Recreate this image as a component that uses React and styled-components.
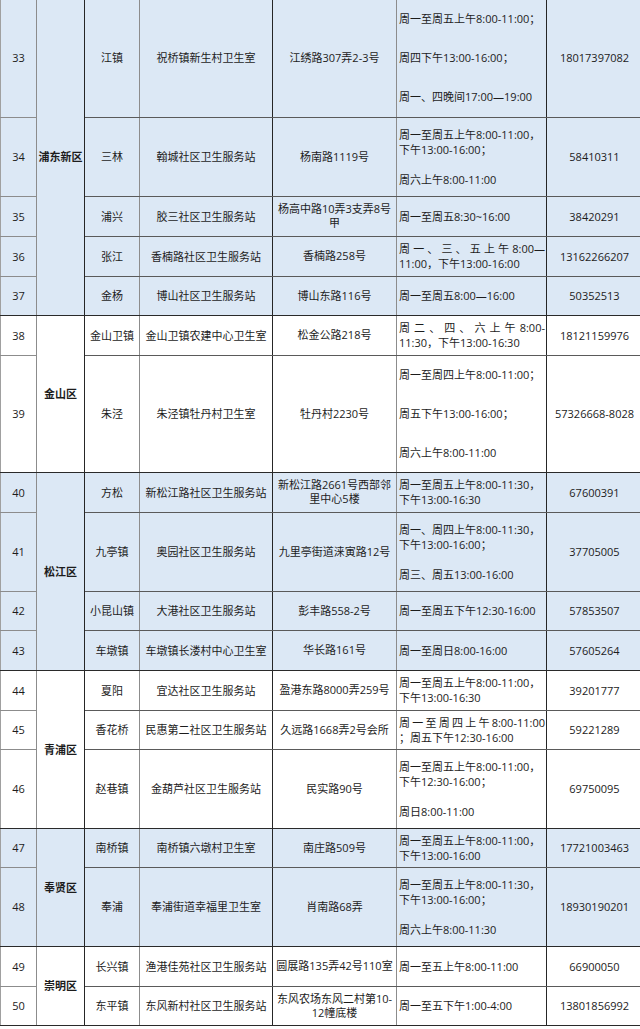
import styled, { createGlobalStyle } from 'styled-components';

const GlobalStyle = createGlobalStyle`
    html, body {
        margin: 0;
        padding: 0;
        background: #ffffff;
        overflow: hidden;
    }
    body {
        font-family: "Open Sans", "Noto Sans CJK SC", sans-serif;
        color: #1c1c1c;
    }
`;

const Sheet = styled.table`
    width: 642px;
    margin-top: -1px;
    border-collapse: collapse;
    table-layout: fixed;
    font-size: 11px;
    line-height: 15px;
`;

const Col = styled.col`
    width: ${p => p.$w}px;
`;

const Row = styled.tr`
    height: ${p => p.$h}px;
    background: ${p => (p.$blue ? '#dce8f5' : '#ffffff')};
`;

const Cell = styled.td`
    padding: 0 1px;
    text-align: center;
    vertical-align: middle;
    white-space: nowrap;
    overflow: hidden;
    border-bottom: 1px solid ${p => (p.$groupEnd ? '#2a2a2a' : '#5a5a5a')};
    border-right: 1px solid ${p => (p.$dark ? '#262626' : '#8c8c8c')};
`;

const NoCell = styled(Cell)`
    border-left: 1px solid #a0a0a0;
    border-bottom-color: ${p => (p.$groupEnd ? '#2a2a2a' : '#8c8c8c')};
`;

const DistrictCell = styled(Cell)`
    font-weight: 700;
    border-bottom-color: #2a2a2a;
`;

const HoursCell = styled(Cell)`
    text-align: left;
    padding: 0 1px 0 2px;
`;

const Stack = styled.div`
    display: flex;
    flex-direction: column;
    gap: ${p => p.$gap || 0}px;
`;

const Line = styled.div`
    height: 15px;
    text-align: ${p => (p.$justify ? 'justify' : 'inherit')};
    text-align-last: ${p => (p.$justify ? 'justify' : 'auto')};
    white-space: ${p => (p.$justify ? 'normal' : 'nowrap')};
`;

const AddrLine = styled.div`
    line-height: 14px;
`;

const groups = [
    {
        district: '浦东新区', blue: true, rows: [
            { no: 33, h: 118, town: '江镇', name: '祝桥镇新生村卫生室', addr: ['江绣路307弄2-3号'], gap: 24,
                hours: ['周一至周五上午8:00-11:00；', '周四下午13:00-16:00；', '周一、四晚间17:00—19:00'], phone: '18017397082' },
            { no: 34, h: 79, town: '三林', name: '翰城社区卫生服务站', addr: ['杨南路1119号'],
                hours: ['周一至周五上午8:00-11:00，', '下午13:00-16:00；', '', '周六上午8:00-11:00'], phone: '58410311' },
            { no: 35, h: 40, town: '浦兴', name: '胶三社区卫生服务站', addr: ['杨高中路10弄3支弄8号', '甲'],
                hours: ['周一至周五8:30~16:00'], phone: '38420291' },
            { no: 36, h: 40, town: '张江', name: '香楠路社区卫生服务站', addr: ['香楠路258号'],
                hours: ['*周一、三、五上午8:00—', '11:00，下午13:00-16:00'], phone: '13162266207' },
            { no: 37, h: 39, town: '金杨', name: '博山社区卫生服务站', addr: ['博山东路116号'],
                hours: ['周一至周五8:00—16:00'], phone: '50352513' },
        ],
    },
    {
        district: '金山区', rows: [
            { no: 38, h: 40, town: '金山卫镇', name: '金山卫镇农建中心卫生室', addr: ['松金公路218号'],
                hours: ['*周二、四、六上午8:00-', '11:30，下午13:00-16:30'], phone: '18121159976' },
            { no: 39, h: 117, town: '朱泾', name: '朱泾镇牡丹村卫生室', addr: ['牡丹村2230号'], gap: 24,
                hours: ['周一至周四上午8:00-11:00；', '周五下午13:00-16:00；', '周六上午8:00-11:00'], phone: '57326668-8028' },
        ],
    },
    {
        district: '松江区', blue: true, rows: [
            { no: 40, h: 40, town: '方松', name: '新松江路社区卫生服务站', addr: ['新松江路2661号西部邻', '里中心5楼'],
                hours: ['周一至周五上午8:00-11:30，', '下午13:00-16:30'], phone: '67600391' },
            { no: 41, h: 79, town: '九亭镇', name: '奥园社区卫生服务站', addr: ['九里亭街道涞寅路12号'],
                hours: ['周一、周四上午8:00-11:30，', '下午13:00-16:00；', '', '周三、周五13:00-16:00'], phone: '37705005' },
            { no: 42, h: 39, town: '小昆山镇', name: '大港社区卫生服务站', addr: ['彭丰路558-2号'],
                hours: ['周一至周五下午12:30-16:00'], phone: '57853507' },
            { no: 43, h: 40, town: '车墩镇', name: '车墩镇长溇村中心卫生室', addr: ['华长路161号'],
                hours: ['周一至周日8:00-16:00'], phone: '57605264' },
        ],
    },
    {
        district: '青浦区', rows: [
            { no: 44, h: 40, town: '夏阳', name: '宜达社区卫生服务站', addr: ['盈港东路8000弄259号'],
                hours: ['周一至周五上午8:00-11:00，', '下午13:00-16:30'], phone: '39201777' },
            { no: 45, h: 39, town: '香花桥', name: '民惠第二社区卫生服务站', addr: ['久远路1668弄2号会所'],
                hours: ['*周一至周四上午8:00-11:00', '；周五下午12:30-16:00'], phone: '59221289' },
            { no: 46, h: 79, town: '赵巷镇', name: '金葫芦社区卫生服务站', addr: ['民实路90号'],
                hours: ['周一至周五上午8:00-11:00，', '下午12:30-16:00；', '', '周日8:00-11:00'], phone: '69750095' },
        ],
    },
    {
        district: '奉贤区', blue: true, rows: [
            { no: 47, h: 39, town: '南桥镇', name: '南桥镇六墩村卫生室', addr: ['南庄路509号'],
                hours: ['周一至周五上午8:00-11:00，', '下午13:00-16:00'], phone: '17721003463' },
            { no: 48, h: 79, town: '奉浦', name: '奉浦街道幸福里卫生室', addr: ['肖南路68弄'],
                hours: ['周一至周五上午8:00-11:30，', '下午13:00-16:00；', '', '周六上午8:00-11:30'], phone: '18930190201' },
        ],
    },
    {
        district: '崇明区', rows: [
            { no: 49, h: 40, town: '长兴镇', name: '渔港佳苑社区卫生服务站', addr: ['圆展路135弄42号110室'],
                hours: ['周一至五上午8:00-11:00'], phone: '66900050' },
            { no: 50, h: 39, town: '东平镇', name: '东风新村社区卫生服务站', addr: ['东风农场东风二村第10-', '12幢底楼'],
                hours: ['周一至五下午1:00-4:00'], phone: '13801856992' },
        ],
    },
];

function Hours({ lines, gap }) {
    return (
        <Stack $gap={gap}>
            {lines.map((l, i) => {
                const justify = l.startsWith('*');
                return (
                    <Line key={i} $justify={justify}>
                        {justify ? l.slice(1) : l || '\u00a0'}
                    </Line>
                );
            })}
        </Stack>
    );
}

export default function App() {
    return (
        <>
            <GlobalStyle />
            <Sheet>
                <colgroup>
                    <Col $w={36} />
                    <Col $w={48} />
                    <Col $w={55} />
                    <Col $w={133} />
                    <Col $w={124} />
                    <Col $w={150} />
                    <Col $w={96} />
                </colgroup>
                <tbody>
                    {groups.map(g =>
                        g.rows.map((r, i) => {
                            const end = i === g.rows.length - 1;
                            return (
                                <Row key={r.no} $h={r.h} $blue={g.blue}>
                                    <NoCell $groupEnd={end}>{r.no}</NoCell>
                                    {i === 0 && (
                                        <DistrictCell rowSpan={g.rows.length} $dark>
                                            {g.district}
                                        </DistrictCell>
                                    )}
                                    <Cell $groupEnd={end}>{r.town}</Cell>
                                    <Cell $groupEnd={end} $dark>{r.name}</Cell>
                                    <Cell $groupEnd={end}>
                                        {r.addr.map((a, k) => <AddrLine key={k}>{a}</AddrLine>)}
                                    </Cell>
                                    <HoursCell $groupEnd={end} $dark>
                                        <Hours lines={r.hours} gap={r.gap} />
                                    </HoursCell>
                                    <Cell $groupEnd={end}>{r.phone}</Cell>
                                </Row>
                            );
                        })
                    )}
                </tbody>
            </Sheet>
        </>
    );
}
